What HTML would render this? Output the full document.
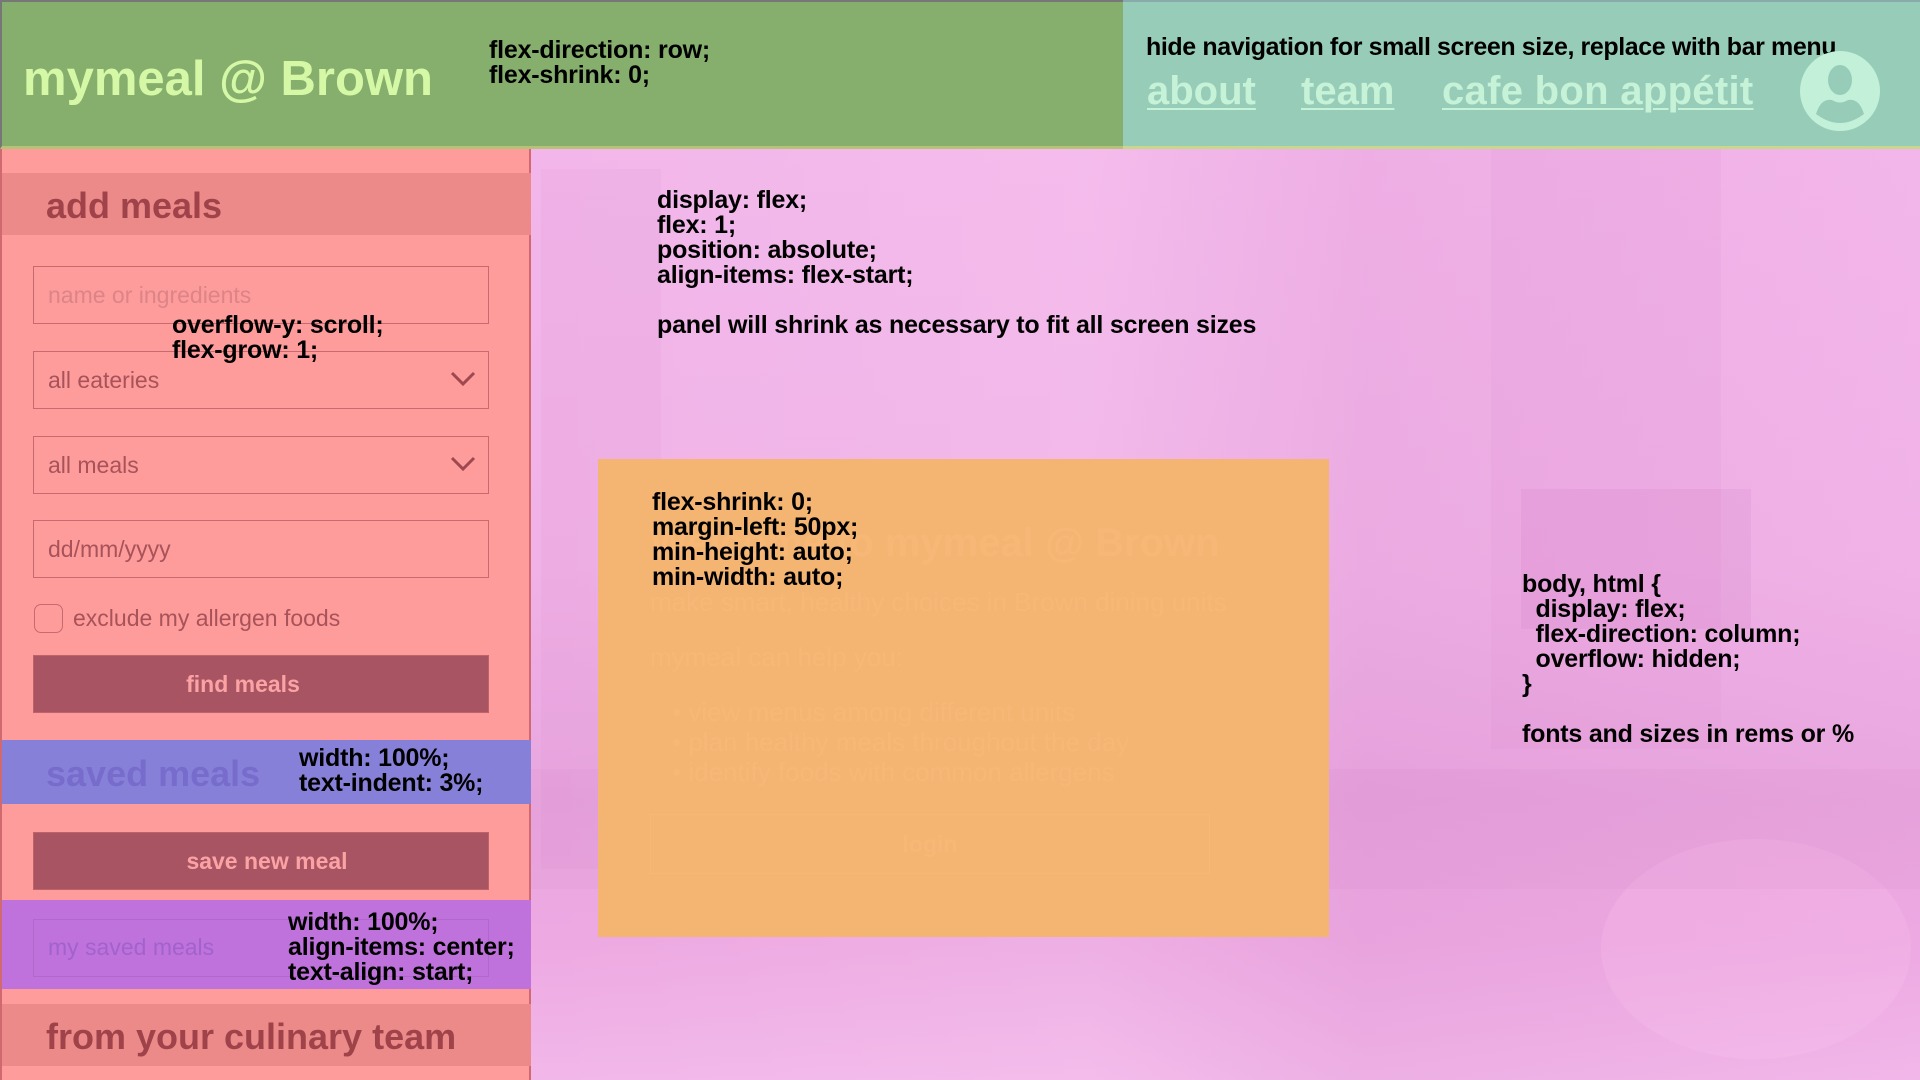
<!DOCTYPE html>
<html><head><meta charset="utf-8"><style>
*{margin:0;padding:0;box-sizing:border-box}
html,body{width:1920px;height:1080px;overflow:hidden}
body{position:relative;font-family:"Liberation Sans",sans-serif;background:#f1b3e8}
.abs{position:absolute}
.note{position:absolute;font-weight:bold;font-size:25px;line-height:25px;color:#000;white-space:pre;letter-spacing:-0.2px}
#hdr{left:0;top:0;width:1123px;height:149px;background:#86ae6c;border-top:2px solid #777;border-left:2px solid #777;border-bottom:3px solid #b7c276}
#nav{left:1123px;top:0;width:797px;height:149px;background:#97cdb8;border-top:2px solid #8aa;border-bottom:3px solid #c8d88a}
#side{left:0;top:149px;width:531px;height:931px;background:#fe9c9b;border-right:2px solid #d06a70;border-left:2px solid #d06a70}
.band{position:absolute;left:0;width:529px}
.field{position:absolute;left:31px;width:456px;border:1.5px solid #c7696e;font-size:23px;color:#a8525a;padding-left:14px;display:flex;align-items:center}
.btn{position:absolute;left:31px;width:456px;background:#a85462;border:1px solid #c0626a;color:#fba3a4;font-weight:bold;font-size:23px;display:flex;align-items:center;justify-content:center}
.chev{position:absolute;right:12px;top:50%;margin-top:-9px}
#main{left:531px;top:149px;width:1389px;height:931px;overflow:hidden;background:
 linear-gradient(90deg,rgba(255,255,255,0) 0,rgba(255,255,255,.08) 40%,rgba(200,120,190,.12) 60%,rgba(255,255,255,0) 100%),
 linear-gradient(180deg,#f3b6ea 0,#f0b2e7 45%,#e9a6df 70%,#eda9e2 85%,#f2b7e9 100%)}
#orange{left:598px;top:459px;width:731px;height:478px;background:#f4b472}
.faint{position:absolute;color:#f7b877;white-space:nowrap}
</style></head><body>
<div id="hdr" class="abs">
 <div class="abs" style="left:21px;top:49px;font-size:49px;font-weight:bold;color:#d4f8a6">mymeal @ Brown</div>
</div>
<div class="note" style="left:489px;top:38px">flex-direction: row;
flex-shrink: 0;</div>
<div id="nav" class="abs">
 <div class="note" style="left:23px;top:33px;position:absolute;letter-spacing:-0.4px">hide navigation for small screen size, replace with bar menu</div>
 <div class="abs" style="left:24px;top:67px;font-size:40px;font-weight:bold;color:#c6f2d8;text-decoration:underline;text-decoration-thickness:2px;text-underline-offset:4px">about</div>
 <div class="abs" style="left:178px;top:67px;font-size:40px;font-weight:bold;color:#c6f2d8;text-decoration:underline;text-decoration-thickness:2px;text-underline-offset:4px">team</div>
 <div class="abs" style="left:319px;top:67px;font-size:40px;font-weight:bold;color:#c6f2d8;text-decoration:underline;text-decoration-thickness:2px;text-underline-offset:4px;letter-spacing:0.3px">cafe bon appétit</div>
 <svg class="abs" style="left:676px;top:48px" width="82" height="82" viewBox="0 0 82 82"><circle cx="41" cy="41" r="40" fill="#c3f0d8"/><ellipse cx="41" cy="30" rx="12" ry="15" fill="#97cdb8"/><path d="M17 64 Q22 48 33 50 Q41 55 49 50 Q60 48 65 64 Q41 82 17 64Z" fill="#97cdb8"/></svg>
</div>
<div id="main" class="abs">
 <div class="abs" style="left:10px;top:20px;width:120px;height:700px;background:rgba(200,110,180,.07)"></div>
 <div class="abs" style="left:960px;top:0;width:230px;height:600px;background:rgba(200,110,180,.06)"></div>
 <div class="abs" style="left:990px;top:340px;width:230px;height:140px;background:rgba(190,90,170,.1)"></div>
 <div class="abs" style="left:1070px;top:690px;width:310px;height:220px;border-radius:50%;background:rgba(255,200,240,.2)"></div>
 <div class="abs" style="left:0;top:620px;width:1389px;height:120px;background:rgba(190,100,170,.06)"></div>
</div>
<div id="side" class="abs">
 <div class="band" style="top:24px;height:62px;background:#eb8a89"><div class="abs" style="left:44px;top:12px;font-size:36px;font-weight:bold;color:#a0424a">add meals</div></div>
 <div class="field" style="top:117px;height:58px;color:#dc8488">name or ingredients</div>
 <div class="field" style="top:202px;height:58px">all eateries<svg class="chev" width="26" height="16"><path d="M2 2 L13 13 L24 2" fill="none" stroke="#a04850" stroke-width="3"/></svg></div>
 <div class="field" style="top:287px;height:58px">all meals<svg class="chev" width="26" height="16"><path d="M2 2 L13 13 L24 2" fill="none" stroke="#a04850" stroke-width="3"/></svg></div>
 <div class="field" style="top:371px;height:58px">dd/mm/yyyy</div>
 <div class="abs" style="left:32px;top:455px;width:29px;height:29px;border:1.5px solid #c7696e;border-radius:7px"></div>
 <div class="abs" style="left:71px;top:456px;font-size:23px;color:#a8525a">exclude my allergen foods</div>
 <div class="btn" style="top:506px;height:58px;padding-right:36px">find meals</div>
 <div class="band" style="top:591px;height:64px;background:#8780d9"><div class="abs" style="left:44px;top:13px;font-size:36px;font-weight:bold;color:#776ccc">saved meals</div></div>
 <div class="btn" style="top:683px;height:58px;padding-left:12px">save new meal</div>
 <div class="band" style="top:751px;height:89px;background:#c072dc"><div class="abs" style="left:31px;top:19px;width:456px;height:58px;border:1px solid #b068cc;font-size:23px;color:#a162cc;padding:14px 14px">my saved meals</div></div>
 <div class="band" style="top:855px;height:62px;background:#eb8a89"><div class="abs" style="left:44px;top:12px;font-size:36px;font-weight:bold;color:#a0424a">from your culinary team</div></div>
</div>
<div class="note" style="left:172px;top:313px">overflow-y: scroll;
flex-grow: 1;</div>
<div class="note" style="left:657px;top:188px">display: flex;
flex: 1;
position: absolute;
align-items: flex-start;

panel will shrink as necessary to fit all screen sizes</div>
<div id="orange" class="abs">
 <div class="faint" style="left:52px;top:62px;font-size:40px;font-weight:bold">Welcome to mymeal @ Brown</div>
 <div class="faint" style="left:52px;top:128px;font-size:26px">make smart, healthy choices in Brown dining units</div>
 <div class="faint" style="left:52px;top:183px;font-size:26px">mymeal can help you:</div>
 <div class="faint" style="left:74px;top:238px;font-size:26px;line-height:30px">• view menus among different units<br>• plan healthy meals throughout the day<br>• identify foods with common allergens</div>
 <div class="abs" style="left:52px;top:355px;width:560px;height:60px;border:1px solid #f7b877;color:#f7b877;font-weight:bold;font-size:23px;display:flex;align-items:center;justify-content:center">login</div>
</div>
<div class="note" style="left:652px;top:490px">flex-shrink: 0;
margin-left: 50px;
min-height: auto;
min-width: auto;</div>
<div class="note" style="left:299px;top:746px;position:absolute">width: 100%;
text-indent: 3%;</div>
<div class="note" style="left:288px;top:910px">width: 100%;
align-items: center;
text-align: start;</div>
<div class="note" style="left:1522px;top:572px">body, html {
  display: flex;
  flex-direction: column;
  overflow: hidden;
}

fonts and sizes in rems or %</div>
</body></html>
